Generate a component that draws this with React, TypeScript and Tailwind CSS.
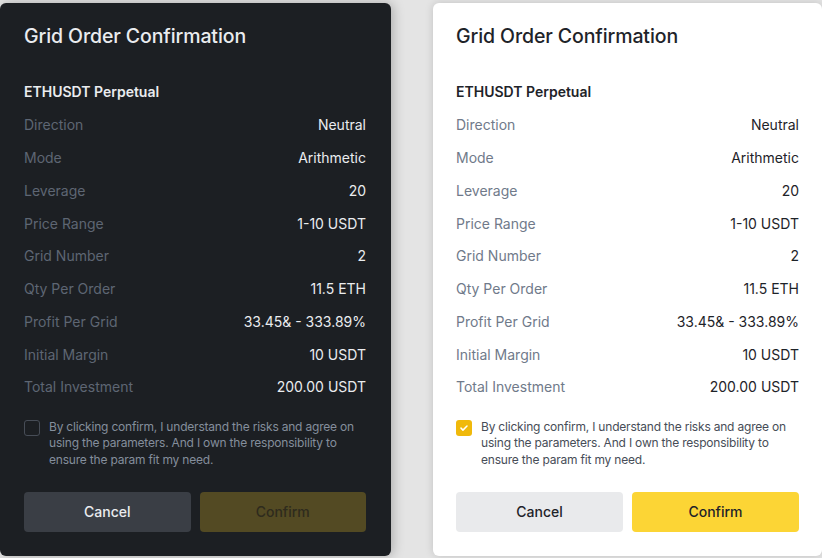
import React from 'react';

interface Row {
  label: string;
  value: string;
}

const rows: Row[] = [
  { label: 'Direction', value: 'Neutral' },
  { label: 'Mode', value: 'Arithmetic' },
  { label: 'Leverage', value: '20' },
  { label: 'Price Range', value: '1-10 USDT' },
  { label: 'Grid Number', value: '2' },
  { label: 'Qty Per Order', value: '11.5 ETH' },
  { label: 'Profit Per Grid', value: '33.45& - 333.89%' },
  { label: 'Initial Margin', value: '10 USDT' },
  { label: 'Total Investment', value: '200.00 USDT' },
];

function ConfirmCard({ dark }: { dark: boolean }) {
  return (
    <div
      className={
        dark
          ? 'flex flex-col w-[391px] h-[553px] rounded-md bg-[#1c1f23] pt-[19px] pl-6 pr-[25px] shadow-[2px_0_12px_rgba(0,0,0,0.25)]'
          : 'flex flex-col w-[389px] h-[553px] rounded-md bg-white pt-[19px] pl-[23px] pr-[23px] shadow-[0_0_8px_rgba(0,0,0,0.15)]'
      }
    >
      <h2
        className={
          dark
            ? 'text-[19.5px] leading-[28px] font-medium tracking-[-0.1px] text-[#eaecef]'
            : 'text-[19.5px] leading-[28px] font-medium tracking-[-0.1px] text-[#1e2329]'
        }
      >
        Grid Order Confirmation
      </h2>

      <div
        className={
          dark
            ? 'mt-8 text-sm leading-5 font-semibold text-[#eaecef]'
            : 'mt-8 text-sm leading-5 font-semibold text-[#1e2329]'
        }
      >
        ETHUSDT Perpetual
      </div>

      <div className="mt-[7px] flex flex-col">
        {rows.map((row) => (
          <div key={row.label} className="flex h-[32.75px] items-center justify-between text-sm">
            <span className={dark ? 'text-[#5e6673]' : 'text-[#707a8a]'}>{row.label}</span>
            <span className={dark ? 'text-[#eaecef]' : 'text-[#1e2329]'}>{row.value}</span>
          </div>
        ))}
      </div>

      {/* Agreement */}
      <div className="mt-[15px] flex items-start gap-[9px]">
        {dark ? (
          <div className="mt-[1px] size-4 shrink-0 rounded-[3px] border border-[#474d57]" />
        ) : (
          <div className="mt-[1px] flex size-4 shrink-0 items-center justify-center rounded-[3px] bg-[#f0b90b]">
            <svg viewBox="0 0 16 16" className="size-3" fill="none">
              <path d="M4 8.2l2.6 2.6L12 5.4" stroke="#ffffff" strokeWidth="2" strokeLinecap="round" strokeLinejoin="round" />
            </svg>
          </div>
        )}
        <p
          className={
            dark
              ? 'text-[12px] leading-[16.5px] tracking-[-0.2px] text-[#848e9c]'
              : 'text-[12px] leading-[16.5px] tracking-[-0.2px] text-[#474d57]'
          }
        >
          By clicking confirm, I understand the risks and agree on
          <br />
          using the parameters. And I own the responsibility to
          <br />
          ensure the param fit my need.
        </p>
      </div>

      <div className="mt-6 flex gap-[9px]">
        <button
          className={
            dark
              ? 'h-10 flex-1 rounded bg-[#3a3e45] text-sm font-medium text-[#eaecef]'
              : 'h-10 flex-1 rounded bg-[#e9eaec] text-sm font-medium text-[#1e2329]'
          }
        >
          Cancel
        </button>
        <button
          className={
            dark
              ? 'h-10 flex-1 rounded bg-[#534a23] text-sm font-medium text-[#2e2b1d]'
              : 'h-10 flex-1 rounded bg-[#fcd535] text-sm font-medium text-[#1e2329]'
          }
        >
          Confirm
        </button>
      </div>
    </div>
  );
}

export default function App() {
  return (
    <div
      className="flex h-[558px] w-[822px] gap-[42px] overflow-hidden bg-[#e4e4e4] pt-[3px]"
      style={{ fontFamily: 'Inter, "Noto Sans", sans-serif' }}
    >
      <ConfirmCard dark />
      <ConfirmCard dark={false} />
    </div>
  );
}
